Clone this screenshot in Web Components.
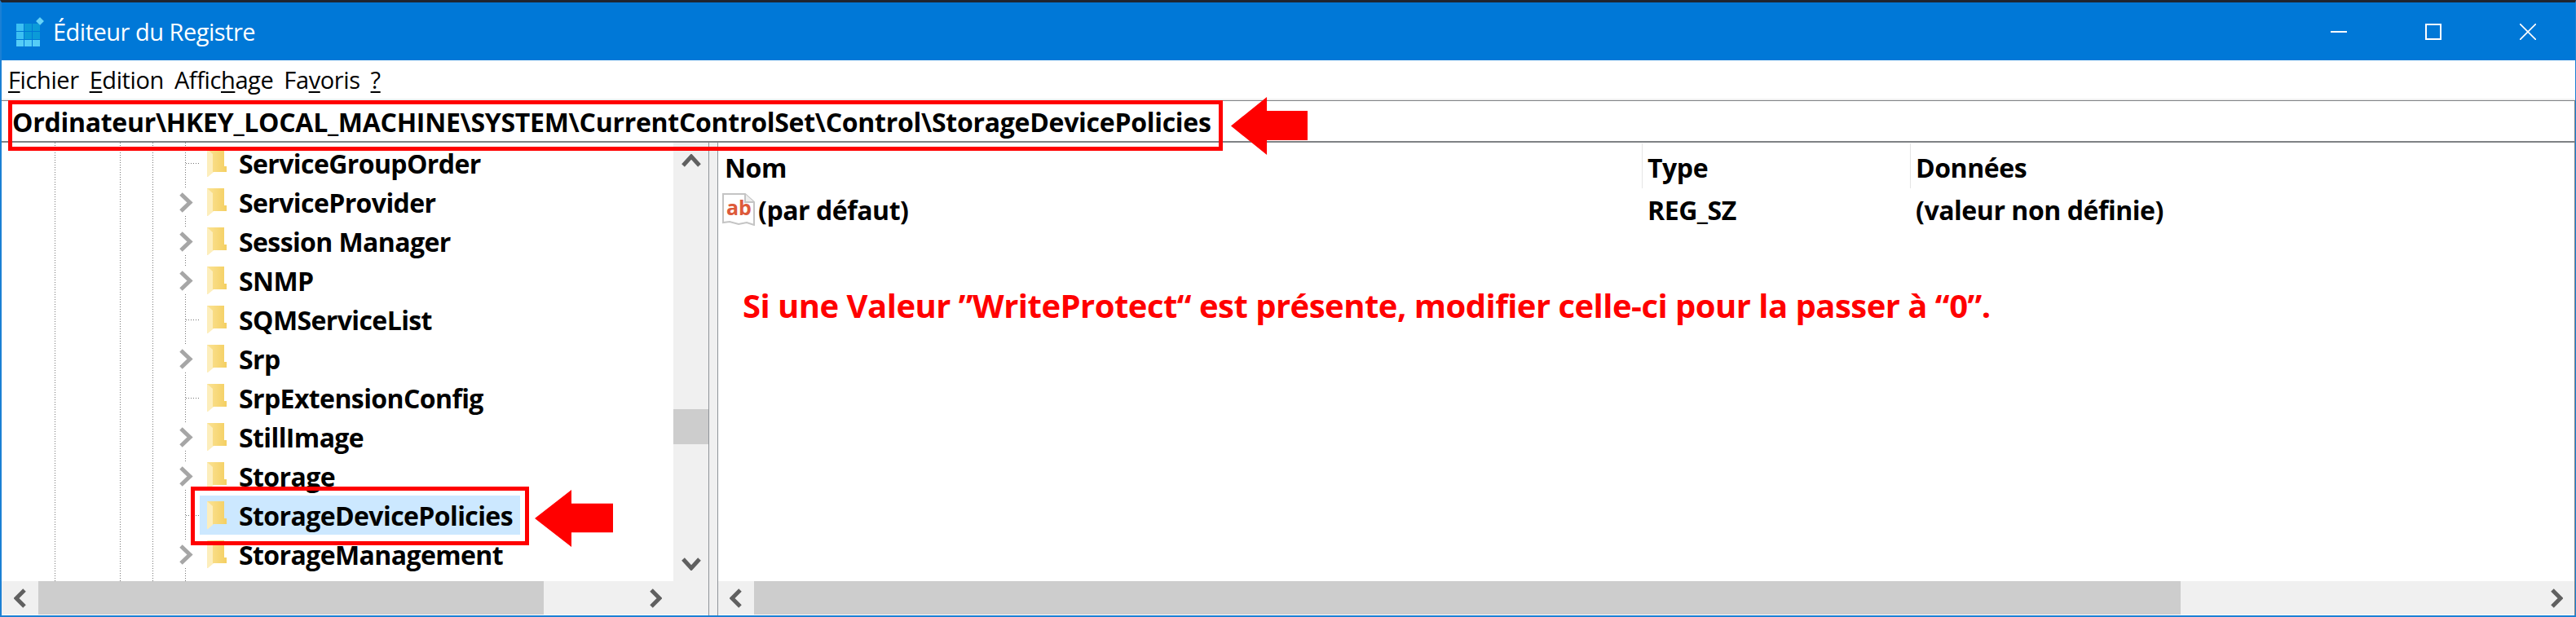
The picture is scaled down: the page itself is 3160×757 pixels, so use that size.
<!doctype html>
<html>
<head>
<meta charset="utf-8">
<title>Éditeur du Registre</title>
<style>
  html, body { margin: 0; height: 100%; overflow: hidden; background: #fff; }
  body { font-family: "Open Sans", "Noto Sans", sans-serif; color: #000; }
</style>
</head>
<body>
<reg-window></reg-window>

<script>
const FONT = '"Open Sans", "Noto Sans", sans-serif';

class RegTitlebar extends HTMLElement {
  constructor() {
    super();
    this.attachShadow({ mode: 'open' }).innerHTML = `
      <style>
        :host { display: flex; align-items: center; height: 71px; background: #0078d7; color: #fff; }
        svg { display: block; flex: none; }
        .logo { margin-left: 16px; }
        .title { margin-left: 11px; font: 400 29px ${FONT}; letter-spacing: -0.5px; white-space: nowrap; }
        .btns { margin-left: auto; display: flex; }
        .btn { width: 116px; height: 71px; display: flex; align-items: center; justify-content: center; }
      </style>
      <svg class="logo" width="36" height="38" viewBox="0 0 36 38">
        <rect x="2" y="9" width="9" height="9" fill="#3cc0f2"/><rect x="12" y="9" width="9" height="9" fill="#0b9bd8"/><rect x="22" y="9" width="9" height="9" fill="#0b9bd8"/>
        <rect x="2" y="19" width="9" height="9" fill="#3cc0f2"/><rect x="12" y="19" width="9" height="9" fill="#0b9bd8"/><rect x="22" y="19" width="9" height="9" fill="#0b9bd8"/>
        <rect x="2" y="29" width="9" height="8" fill="#55cdf7"/><rect x="12" y="29" width="9" height="8" fill="#55cdf7"/><rect x="22" y="29" width="9" height="8" fill="#55cdf7"/>
        <path d="M31 1l5 5-5 5-5-5z" fill="#66d2f8" stroke="#2a9fe0"/>
      </svg>
      <span class="title"><slot></slot></span>
      <div class="btns">
        <div class="btn"><svg width="20" height="20"><rect y="9" width="20" height="2" fill="#fff"/></svg></div>
        <div class="btn"><svg width="20" height="20"><rect x="1" y="1" width="18" height="18" fill="none" stroke="#fff" stroke-width="2"/></svg></div>
        <div class="btn"><svg width="20" height="20"><path d="M0 0L20 20M20 0L0 20" stroke="#fff" stroke-width="1.6"/></svg></div>
      </div>`;
  }
}

class RegMenubar extends HTMLElement {
  constructor() {
    super();
    this.attachShadow({ mode: 'open' }).innerHTML = `
      <style>
        :host { display: flex; height: 47px; align-items: center; padding-left: 8px; gap: 13px; background: #fff;
                font: 400 29px ${FONT}; letter-spacing: -0.4px; border-bottom: 2px solid #f0f0f0; }
        u { text-underline-offset: 3px; }
      </style>
      <span><u>F</u>ichier</span><span><u>E</u>dition</span><span>Affic<u>h</u>age</span><span>Fa<u>v</u>oris</span><span><u>?</u></span>`;
  }
}

class RegAddress extends HTMLElement {
  constructor() {
    super();
    this.attachShadow({ mode: 'open' }).innerHTML = `
      <style>
        :host { display: flex; align-items: center; height: 47px; padding: 2px 0 0 13px; background: #fff;
                border-top: 1px solid #7f8285; border-bottom: 2px solid #7f8285; border-right: 1px solid #7f8285;
                font: 700 32px ${FONT}; letter-spacing: -0.28px; white-space: nowrap; }
      </style>
      <slot></slot>`;
  }
}

class RegTreeRow extends HTMLElement {
  constructor() {
    super();
    const arrow = this.hasAttribute('arrow');
    const sel = this.hasAttribute('selected');
    this.attachShadow({ mode: 'open' }).innerHTML = `
      <style>
        :host { display: block; height: 48px; }
        .row { display: flex; align-items: center; height: 48px; position: relative; }
        .lead { width: 243px; flex: none; display: flex; align-items: center; }
        .hline { width: 17px; height: 1px; margin-left: 226px; background: repeating-linear-gradient(90deg, #777 0 1px, transparent 1px 3px); }
        .chev { margin-left: 212px; padding: 4px 8px 4px 6px; background: #fff; }
        .item { display: flex; align-items: center; height: 48px; padding: 0 9px; gap: 15px;
                background: ${sel ? '#cce8ff' : 'transparent'}; }
        .label { font: 700 32px ${FONT}; letter-spacing: -0.6px; white-space: nowrap; }
        svg { display: block; flex: none; }
      </style>
      <div class="row">
        <div class="lead">
          ${arrow
            ? `<div class="chev"><svg width="17" height="25" viewBox="0 0 17 25"><path d="M2 2L13 12.5L2 23" fill="none" stroke="#a6a6a6" stroke-width="5"/></svg></div>`
            : `<div class="hline"></div>`}
        </div>
        <div class="item">
          <svg width="24" height="35" viewBox="0 0 24 35">
            <defs><linearGradient id="fb" x1="0" x2="1" y1="0" y2="0"><stop offset="0" stop-color="#fbe394"/><stop offset="1" stop-color="#f4cf62"/></linearGradient></defs>
            <path d="M0 0H21V21H24V28H8L0 33z" fill="url(#fb)"/>
            <path d="M0 0L7 6V29L1 34H0z" fill="#fdeebc"/>
          </svg>
          <span class="label"><slot></slot></span>
        </div>
      </div>`;
  }
}

class RegScrollbar extends HTMLElement {
  constructor() {
    super();
    const vert = this.getAttribute('dir') === 'v';
    const a = this.getAttribute('start');
    const b = this.getAttribute('size');
    const end = this.getAttribute('end');
    const chev = d => `<svg width="16" height="24" viewBox="0 0 16 24" style="display:block"><path d="${d}" fill="none" stroke="#606060" stroke-width="5"/></svg>`;
    this.attachShadow({ mode: 'open' }).innerHTML = vert ? `
      <style>
        :host { display: flex; flex-direction: column; width: 43px; background: #f0f0f0; align-items: stretch; }
        .arrow { height: 43px; display: flex; align-items: center; justify-content: center; flex: none; }
        .thumb { background: #cdcdcd; flex: none; height: ${b}px; margin-top: ${a}px; }
        .sp { flex: 1; }
      </style>
      <div class="arrow"><svg width="24" height="16" viewBox="0 0 24 16"><path d="M2 14L12 3L22 14" fill="none" stroke="#606060" stroke-width="5"/></svg></div>
      <div class="thumb"></div><div class="sp"></div>
      <div class="arrow"><svg width="24" height="16" viewBox="0 0 24 16"><path d="M2 2L12 13L22 2" fill="none" stroke="#606060" stroke-width="5"/></svg></div>` : `
      <style>
        :host { display: flex; height: 41px; background: #f0f0f0; align-items: stretch; }
        .arrow { width: ${end || 44}px; display: flex; align-items: center; justify-content: center; flex: none; }
        .thumb { background: #cdcdcd; flex: none; width: ${b}px; }
        .sp { flex: 1; }
      </style>
      <div class="arrow">${chev('M13 2L3 12L13 22')}</div>
      <div class="thumb"></div><div class="sp"></div>
      <div class="arrow">${chev('M3 2L13 12L3 22')}</div>`;
  }
}

class RegTree extends HTMLElement {
  constructor() {
    super();
    this.attachShadow({ mode: 'open' }).innerHTML = `
      <style>
        :host { display: grid; grid-template-columns: 1fr 43px; grid-template-rows: 1fr 41px 1px; min-height: 0; min-width: 0; background: #fff; }
        .rows { position: relative; overflow: hidden; padding-top: 1px; min-width: 0; }
        .guide { position: absolute; top: 0; bottom: 0; width: 1px;
                 background: repeating-linear-gradient(180deg, #777 0 1px, transparent 1px 3px); }
        .corner { background: #f0f0f0; }
      </style>
      <div class="rows">
        <i class="guide" style="left:65px"></i><i class="guide" style="left:145px"></i>
        <i class="guide" style="left:185px"></i><i class="guide" style="left:225px"></i>
        <slot></slot>
      </div>
      <slot name="vbar"></slot>
      <slot name="hbar"></slot>
      <div class="corner"></div>`;
  }
}

class RegList extends HTMLElement {
  constructor() {
    super();
    this.attachShadow({ mode: 'open' }).innerHTML = `
      <style>
        :host { display: grid; grid-template-rows: 1fr 41px 1px; min-height: 0; min-width: 0; background: #fff; border-right: 1px solid #7f8285; }
        .body { padding: 1px 0 0 6px; font: 700 32px ${FONT}; letter-spacing: -0.45px; overflow: hidden; }
        .row { display: grid; grid-template-columns: 1134px 329px 1fr; align-items: center; height: 52px; }
        .head { height: 55px; align-items: stretch; }
        .cell { display: flex; align-items: center; white-space: nowrap; }
        .head .cell { padding-top: 3px; box-sizing: border-box; }
        .head .cell + .cell { border-left: 1px solid #e5e5e5; margin-left: -7px; padding-left: 6px; }
        .note { margin: 65px 0 0 24px; color: #f00; font: 700 40px ${FONT}; letter-spacing: -0.52px; line-height: 53px; white-space: nowrap; }
        svg { display: block; flex: none; margin: 0 4px 0 -1px; }
      </style>
      <div class="body">
        <div class="row head"><div class="cell" style="padding-left:2px">Nom</div><div class="cell">Type</div><div class="cell">Données</div></div>
        <div class="row">
          <div class="cell">
            <svg width="40" height="40" viewBox="0 0 40 40">
              <path d="M1 1H28L39 11V39L30 36L20 38L9 35L1 36z" fill="#fff" stroke="#c4c4c4" stroke-width="2"/>
              <path d="M28 1V11H39" fill="#eee" stroke="#c4c4c4" stroke-width="2"/>
              <text x="5" y="27" font-family="Open Sans" font-size="25" letter-spacing="0" fill="#dd5a3a">ab</text>
            </svg>(par défaut)
          </div>
          <div class="cell">REG_SZ</div><div class="cell">(valeur non définie)</div>
        </div>
        <div class="note">Si une Valeur ”WriteProtect“ est présente, modifier celle-ci pour la passer à “0”.</div>
      </div>
      <slot></slot>`;
  }
}

// the red marks drawn over the screenshot
class RegMark extends HTMLElement {
  constructor() {
    super();
    const g = n => this.getAttribute(n);
    this.attachShadow({ mode: 'open' }).innerHTML = `
      <style>
        :host { position: absolute; left: ${g('x')}px; top: ${g('y')}px; width: ${g('w')}px; height: ${g('h')}px;
                ${g('kind') === 'box' ? 'box-sizing: border-box; border: 5px solid #f00;' : ''} }
        svg { display: block; }
      </style>
      ${g('kind') === 'arrow' ? `<svg width="${g('w')}" height="${g('h')}" viewBox="0 0 96 71" preserveAspectRatio="none"><path d="M0 35.5L45 0V17H96V53H45V71z" fill="#f00"/></svg>` : ''}`;
  }
}

class RegWindow extends HTMLElement {
  constructor() {
    super();
    this.attachShadow({ mode: 'open' }).innerHTML = `
      <style>
        :host { display: flex; flex-direction: column; position: relative; width: 3160px; height: 757px; box-sizing: border-box;
                background: #fff; border-top: 3px solid #1f2530; border-left: 2px solid #1b80d4; border-right: 1px solid #1b80d4; border-bottom: 2px solid #1b80d4; }
        .panes { flex: 1; min-height: 0; display: grid; grid-template-columns: 867px 12px 1fr; }
        .split { background: #f0f0f0; border-left: 1px solid #8f9499; border-right: 1px solid #8f9499; }
      </style>
      <reg-titlebar>Éditeur du Registre</reg-titlebar>
      <reg-menubar></reg-menubar>
      <reg-address>Ordinateur\\HKEY_LOCAL_MACHINE\\SYSTEM\\CurrentControlSet\\Control\\StorageDevicePolicies</reg-address>
      <div class="panes">
        <reg-tree>
          <reg-tree-row>ServiceGroupOrder</reg-tree-row>
          <reg-tree-row arrow>ServiceProvider</reg-tree-row>
          <reg-tree-row arrow>Session Manager</reg-tree-row>
          <reg-tree-row arrow>SNMP</reg-tree-row>
          <reg-tree-row>SQMServiceList</reg-tree-row>
          <reg-tree-row arrow>Srp</reg-tree-row>
          <reg-tree-row>SrpExtensionConfig</reg-tree-row>
          <reg-tree-row arrow>StillImage</reg-tree-row>
          <reg-tree-row arrow>Storage</reg-tree-row>
          <reg-tree-row selected>StorageDevicePolicies</reg-tree-row>
          <reg-tree-row arrow>StorageManagement</reg-tree-row>
          <reg-scrollbar slot="vbar" dir="v" start="284" size="43"></reg-scrollbar>
          <reg-scrollbar slot="hbar" dir="h" size="620" end="45"></reg-scrollbar>
        </reg-tree>
        <div class="split"></div>
        <reg-list>
          <reg-scrollbar dir="h" size="1750"></reg-scrollbar>
        </reg-list>
      </div>
      <reg-mark kind="box" x="8" y="120" w="1490" h="62"></reg-mark>
      <reg-mark kind="arrow" x="1508" y="116" w="94" h="71"></reg-mark>
      <reg-mark kind="box" x="232" y="594" w="415" h="72"></reg-mark>
      <reg-mark kind="arrow" x="654" y="598" w="96" h="70"></reg-mark>`;
  }
}

customElements.define('reg-titlebar', RegTitlebar);
customElements.define('reg-menubar', RegMenubar);
customElements.define('reg-address', RegAddress);
customElements.define('reg-tree-row', RegTreeRow);
customElements.define('reg-scrollbar', RegScrollbar);
customElements.define('reg-tree', RegTree);
customElements.define('reg-list', RegList);
customElements.define('reg-mark', RegMark);
customElements.define('reg-window', RegWindow);
</script>
</body>
</html>
